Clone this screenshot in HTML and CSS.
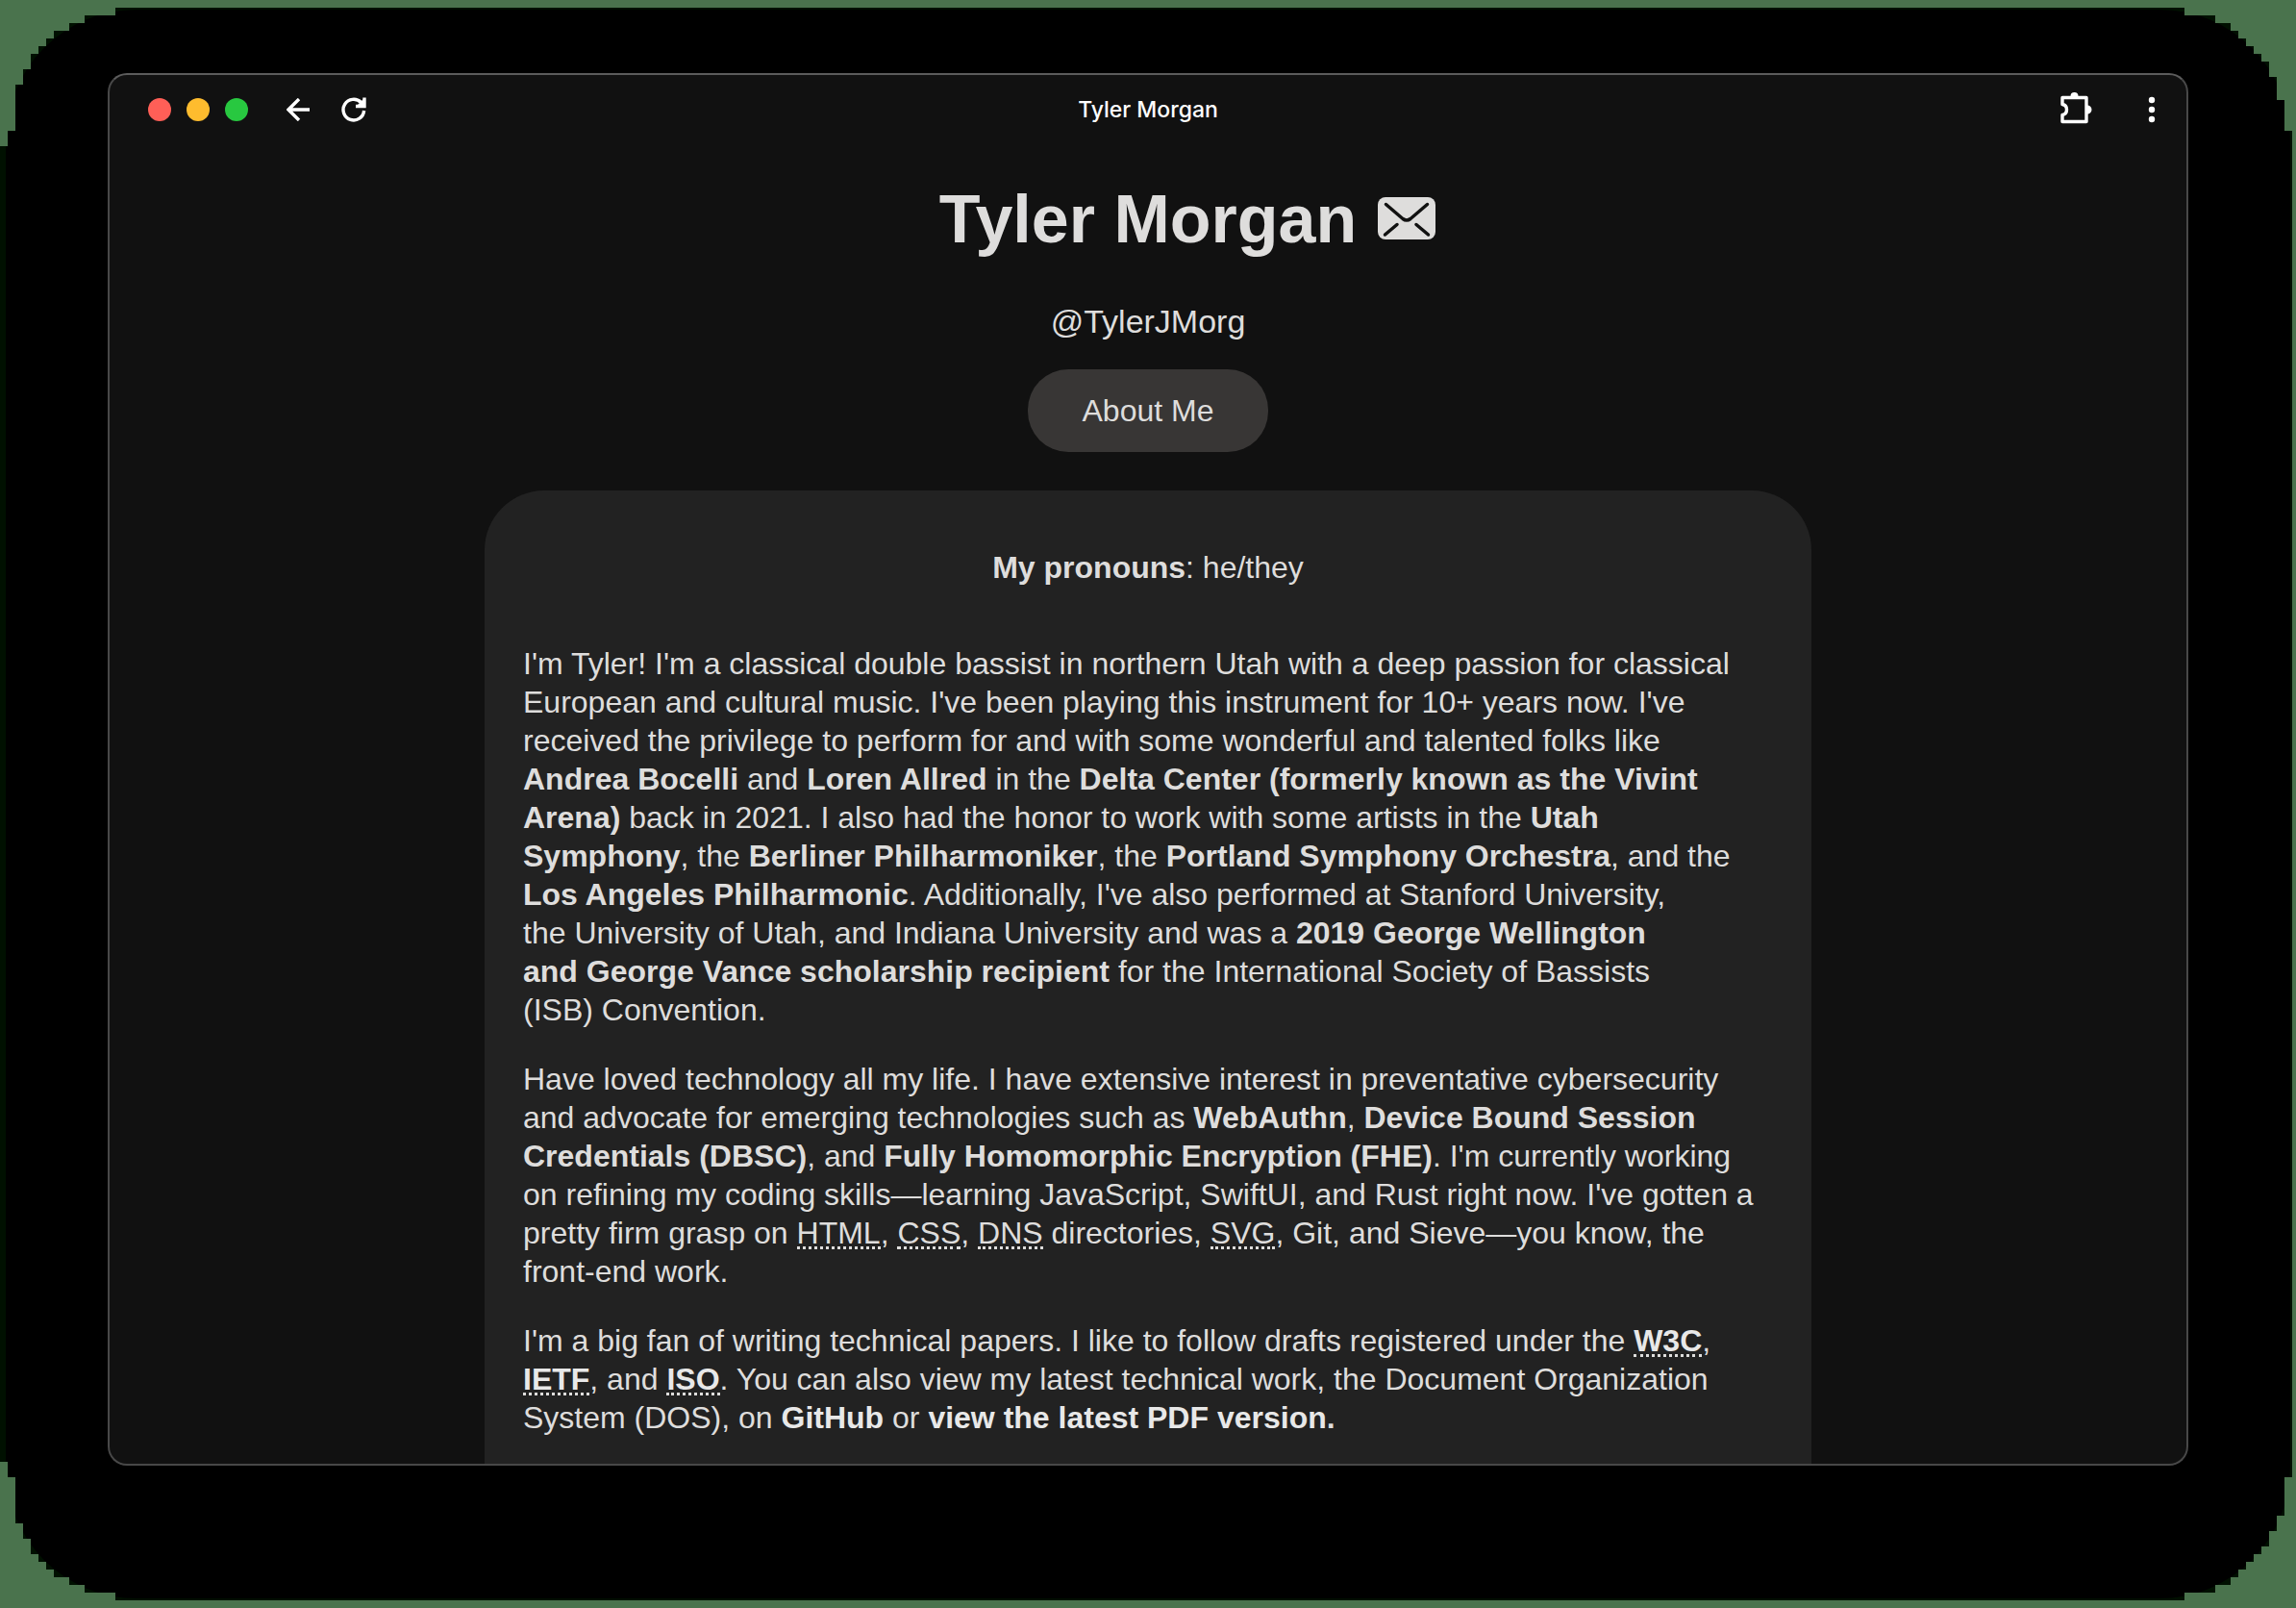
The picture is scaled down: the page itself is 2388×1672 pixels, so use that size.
FILE: index.html
```html
<!DOCTYPE html>
<html lang="en">
<head>
<meta charset="utf-8">
<meta name="viewport" content="width=device-width, initial-scale=1">
<title>Tyler Morgan</title>
<link rel="stylesheet" href="styles.css">
</head>
<body>
<div class="backdrop">
  <div class="shade">
    <div class="window">
      <header class="titlebar">
        <div class="titlebar-group">
          <div class="lights">
            <button class="light light-close" aria-label="Close"></button>
            <button class="light light-minimize" aria-label="Minimize"></button>
            <button class="light light-zoom" aria-label="Zoom"></button>
          </div>
          <button class="tool tool-back" aria-label="Back">
            <svg width="24" height="24" viewBox="0 0 24 24" fill="none" stroke="currentColor" stroke-width="3.400"><path d="M24 12H2M13 1L2 12l11 11"/></svg>
          </button>
          <button class="tool tool-reload" aria-label="Reload">
            <svg width="26" height="26" viewBox="0 0 26 26" fill="none" stroke="currentColor" stroke-width="3.400"><path d="M23.600 14A10.800 10.800 0 1 1 20.500 5.500"/><path d="M15 9.500h9V0.500" /><path d="M17 8h6V2z" fill="currentColor" stroke="none"/></svg>
          </button>
        </div>
        <span class="titlebar-title">Tyler Morgan</span>
        <div class="titlebar-group titlebar-end">
          <button class="tool tool-extensions" aria-label="Extensions">
            <svg width="33" height="34" viewBox="0 0 33 34" fill="none" stroke="currentColor" stroke-width="3.400"><path d="M2 6.500h25v25H2v-7c6-1 6-10 0-11z" stroke-linejoin="round"/><path d="M10.500 5a4 4 0 0 1 8 0zM28 14.500a4 4 0 0 1 0 9z" fill="currentColor" stroke="none"/></svg>
          </button>
          <button class="tool" aria-label="More">
            <svg width="8" height="28" viewBox="0 0 8 28" fill="currentColor"><circle cx="4" cy="4" r="3.200"/><circle cx="4" cy="14" r="3.200"/><circle cx="4" cy="24" r="3.200"/></svg>
          </button>
        </div>
      </header>
      <main class="page">
        <h1 class="name">Tyler Morgan
          <a class="mail" href="#mail" aria-label="Email"><svg width="60" height="44" viewBox="0 0 60 44"><rect width="60" height="44" rx="8" fill="#dedddc"/><path d="M8.500 7.500L26 22.500q4 3 8 0L51.500 7.500M20 28.500L7.500 39M40 28.500L52.500 39" fill="none" stroke="#111" stroke-width="3.500" stroke-linecap="round"/></svg></a>
        </h1>
        <p class="handle">@TylerJMorg</p>
        <button class="about">About Me</button>
        <section class="card">
          <p class="pronouns"><strong>My pronouns</strong>: he/they</p>
          <p>I'm Tyler! I'm a classical double bassist in northern Utah with a deep passion for classical<br>
            European and cultural music. I've been playing this instrument for 10+ years now. I've<br>
            received the privilege to perform for and with some wonderful and talented folks like<br>
            <strong>Andrea Bocelli</strong> and <strong>Loren Allred</strong> in the <strong>Delta Center (formerly known as the Vivint<br>
            Arena)</strong> back in 2021. I also had the honor to work with some artists in the <strong>Utah<br>
            Symphony</strong>, the <strong>Berliner Philharmoniker</strong>, the <strong>Portland Symphony Orchestra</strong>, and the<br>
            <strong>Los Angeles Philharmonic</strong>. Additionally, I've also performed at Stanford University,<br>
            the University of Utah, and Indiana University and was a <strong>2019 George Wellington<br>
            and George Vance scholarship recipient</strong> for the International Society of Bassists<br>
            (ISB) Convention.</p>
          <p>Have loved technology all my life. I have extensive interest in preventative cybersecurity<br>
            and advocate for emerging technologies such as <strong>WebAuthn</strong>, <strong>Device Bound Session<br>
            Credentials (DBSC)</strong>, and <strong>Fully Homomorphic Encryption (FHE)</strong>. I'm currently working<br>
            on refining my coding skills—learning JavaScript, SwiftUI, and Rust right now. I've gotten a<br>
            pretty firm grasp on <abbr>HTML</abbr>, <abbr>CSS</abbr>, <abbr>DNS</abbr> directories, <abbr>SVG</abbr>, Git, and Sieve—you know, the<br>
            front-end work.</p>
          <p>I'm a big fan of writing technical papers. I like to follow drafts registered under the <a href="#w3c"><abbr>W3C</abbr></a>,<br>
            <a href="#ietf"><abbr>IETF</abbr></a>, and <a href="#iso"><abbr>ISO</abbr></a>. You can also view my latest technical work, the Document Organization<br>
            System (DOS), on <a href="#github">GitHub</a> or <a href="#pdf">view the latest PDF version</a><strong>.</strong></p>
        </section>
      </main>
    </div>
  </div>
</div>
</body>
</html>
```
FILE: styles.css
```css
* { box-sizing: border-box; }

body {
  margin: 0;
  background: #4a734d;
  color: #dedddc;
  font: 32px/40px "Liberation Sans", Arial, sans-serif;
}

button {
  margin: 0;
  padding: 0;
  border: 0;
  background: none;
  color: inherit;
  font: inherit;
}

svg { display: block; }

/* Dark plate with stair-stepped corners */
.backdrop {
  display: flex;
  height: 100vh;
  padding: 10px 6px;
  background: #001000;
  clip-path: polygon(
    120px 8px, calc(100% - 116px) 8px,
    calc(100% - 116px) 16px, calc(100% - 84px) 16px,
    calc(100% - 84px) 24px, calc(100% - 68px) 24px,
    calc(100% - 68px) 32px, calc(100% - 60px) 32px,
    calc(100% - 60px) 40px, calc(100% - 52px) 40px,
    calc(100% - 52px) 48px, calc(100% - 44px) 48px,
    calc(100% - 44px) 56px, calc(100% - 36px) 56px,
    calc(100% - 36px) 64px, calc(100% - 28px) 64px,
    calc(100% - 28px) 80px, calc(100% - 20px) 80px,
    calc(100% - 20px) 104px, calc(100% - 12px) 104px,
    calc(100% - 12px) 136px, calc(100% - 4px) 136px,
    calc(100% - 4px) calc(100% - 136px), calc(100% - 12px) calc(100% - 136px),
    calc(100% - 12px) calc(100% - 96px), calc(100% - 20px) calc(100% - 96px),
    calc(100% - 20px) calc(100% - 80px), calc(100% - 28px) calc(100% - 80px),
    calc(100% - 28px) calc(100% - 64px), calc(100% - 36px) calc(100% - 64px),
    calc(100% - 36px) calc(100% - 56px), calc(100% - 44px) calc(100% - 56px),
    calc(100% - 44px) calc(100% - 48px), calc(100% - 52px) calc(100% - 48px),
    calc(100% - 52px) calc(100% - 40px), calc(100% - 60px) calc(100% - 40px),
    calc(100% - 60px) calc(100% - 32px), calc(100% - 68px) calc(100% - 32px),
    calc(100% - 68px) calc(100% - 24px), calc(100% - 84px) calc(100% - 24px),
    calc(100% - 84px) calc(100% - 16px), calc(100% - 116px) calc(100% - 16px),
    calc(100% - 116px) calc(100% - 8px), 120px calc(100% - 8px),
    120px calc(100% - 16px), 88px calc(100% - 16px),
    88px calc(100% - 24px), 72px calc(100% - 24px),
    72px calc(100% - 32px), 56px calc(100% - 32px),
    56px calc(100% - 40px), 48px calc(100% - 40px),
    48px calc(100% - 48px), 40px calc(100% - 48px),
    40px calc(100% - 56px), 32px calc(100% - 56px),
    32px calc(100% - 72px), 24px calc(100% - 72px),
    24px calc(100% - 88px), 16px calc(100% - 88px),
    16px calc(100% - 136px), 8px calc(100% - 136px),
    8px calc(100% - 152px), 0 calc(100% - 152px),
    0 152px, 8px 152px, 8px 136px, 16px 136px,
    16px 88px, 24px 88px, 24px 72px, 32px 72px,
    32px 56px, 40px 56px, 40px 48px, 48px 48px,
    48px 40px, 56px 40px, 56px 32px, 72px 32px,
    72px 24px, 88px 24px, 88px 16px, 120px 16px
  );
}

.shade {
  display: flex;
  flex: 1;
  min-width: 0;
  padding: 66px 106px 138px;
  border-radius: 136px;
  background: #000;
}

.window {
  display: flex;
  flex: 1;
  flex-direction: column;
  min-width: 0;
  overflow: hidden;
  border: 2px solid #484848;
  border-top-color: #5c5c5c;
  border-radius: 20px;
  background: #111;
}

.titlebar {
  display: grid;
  grid-template-columns: 1fr auto 1fr;
  flex: none;
  align-items: center;
  height: 72px;
  padding: 0 32px;
  color: #fff;
}

.titlebar-group { display: flex; align-items: center; }
.titlebar-end { justify-content: flex-end; gap: 58px; }
.titlebar-title { font: 500 23px/32px Inter, sans-serif; }

.lights { display: flex; gap: 16px; margin-left: 8px; }
.light { width: 24px; height: 24px; border-radius: 50%; }
.light-close { background: #ff5f57; }
.light-minimize { background: #febc2e; }
.light-zoom { background: #28c840; }
.tool-back { margin-left: 40px; }
.tool-reload { margin-left: 33px; }
.tool-extensions { padding-bottom: 5px; }

.page {
  display: flex;
  flex-direction: column;
  align-items: center;
  padding: 38px 32px 0;
}

.name {
  position: relative;
  margin: 0;
  font-size: 70px;
  line-height: 80px;
}

/* The envelope hangs beside the centred name */
.mail {
  position: absolute;
  top: 17px;
  left: 100%;
  margin-left: 22px;
}

.handle {
  margin: 46px 0 30px;
  font-size: 34px;
}

.about {
  flex: none;
  width: 250px;
  height: 86px;
  border-radius: 42px;
  background: #383635;
}

.card {
  width: 100%;
  max-width: 1380px;
  margin-top: 40px;
  padding: 60px 40px;
  border-radius: 62px;
  background: #222;
}

.card p { margin: 0 0 32px; }
.card .pronouns { margin-bottom: 60px; text-align: center; }
.card a { color: #e8e8e8; font-weight: 700; text-decoration: none; }
.card abbr { border-bottom: 3px dotted #dedddc; display: inline-block; line-height: 28px; }
```
